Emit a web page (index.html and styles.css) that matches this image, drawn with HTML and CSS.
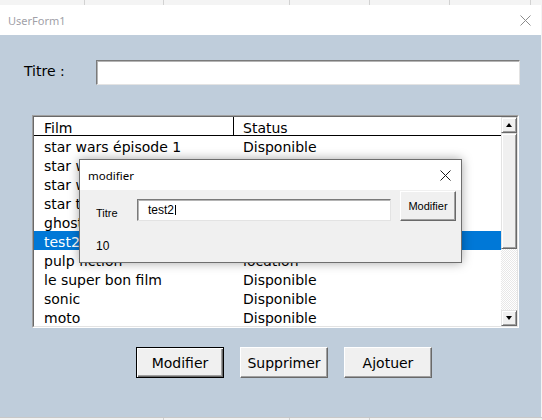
FILE: index.html
```html
<!DOCTYPE html>
<html lang="fr">
<head>
<meta charset="utf-8">
<title>UserForm1</title>
<link rel="stylesheet" href="styles.css">
</head>
<body>
<div class="sheet sheet-top">
  <div class="cell w85"></div><div class="cell w79"></div><div class="cell w126"></div><div class="cell w80"></div><div class="cell w80"></div><div class="cell w81"></div>
</div>
<div class="window">
  <div class="titlebar">
    <span class="title">UserForm1</span>
    <svg class="close" width="11" height="11" viewBox="0 0 11 11"><path d="M0.5 0.5L10.5 10.5M10.5 0.5L0.5 10.5" stroke="#8c8c8c" stroke-width="1" fill="none"/></svg>
  </div>
  <div class="form">
    <div class="titre-row">
      <span class="titre-lbl">Titre :</span>
      <div class="field"></div>
    </div>
    <div class="listbox">
      <div class="lb-inner">
        <div class="list">
          <div class="head"><div class="c1">Film</div><div class="c2">Status</div></div>
          <div class="row"><div class="c1">star wars épisode 1</div><div class="c2">Disponible</div></div>
          <div class="row"><div class="c1">star wars épisode 2</div><div class="c2">location</div></div>
          <div class="row"><div class="c1">star wars épisode 3</div><div class="c2">location</div></div>
          <div class="row"><div class="c1">star trek</div><div class="c2">Disponible</div></div>
          <div class="row"><div class="c1">ghostbusters</div><div class="c2">Disponible</div></div>
          <div class="row sel"><div class="c1">test2</div><div class="c2">location</div></div>
          <div class="row"><div class="c1">pulp fiction</div><div class="c2">location</div></div>
          <div class="row"><div class="c1">le super bon film</div><div class="c2">Disponible</div></div>
          <div class="row"><div class="c1">sonic</div><div class="c2">Disponible</div></div>
          <div class="row"><div class="c1">moto</div><div class="c2">Disponible</div></div>
        </div>
        <div class="scroll">
          <div class="sbtn"><span class="tri-up"></span></div>
          <div class="thumb"></div>
          <div class="track"></div>
          <div class="sbtn"><span class="tri-down"></span></div>
        </div>
      </div>
    </div>
    <div class="buttons">
      <div class="btn default">Modifier</div>
      <div class="btn">Supprimer</div>
      <div class="btn">Ajotuer</div>
    </div>

    <div class="dialog">
      <div class="dlg-title">
        <span class="dlg-name">modifier</span>
        <svg class="close" width="11" height="11" viewBox="0 0 11 11"><path d="M0.5 0.5L10.5 10.5M10.5 0.5L0.5 10.5" stroke="#1a1a1a" stroke-width="1" fill="none"/></svg>
      </div>
      <div class="dlg-body">
        <div class="dlg-row">
          <span class="dlg-lbl">Titre</span>
          <div class="dlg-field"><span class="dlg-text">test2</span><span class="caret"></span></div>
          <div class="dlg-btn">Modifier</div>
        </div>
        <div class="dlg-num">10</div>
      </div>
    </div>
  </div>
</div>
<div class="sheet sheet-bottom">
  <div class="cell w85 nol"></div><div class="cell w79"></div><div class="cell w126"></div><div class="cell w80"></div><div class="cell w80 nol"></div>
</div>
</body>
</html>
```
FILE: styles.css
```css
* { box-sizing: border-box; }
html, body { margin: 0; padding: 0; }
body {
  width: 542px;
  height: 420px;
  overflow: hidden;
  background: #f4f4f4;
  font-family: "DejaVu Sans", sans-serif;
  color: #000;
}

/* excel sheet behind */
.sheet { display: flex; background: #f4f4f4; }
.sheet-top { height: 5px; }
.sheet-bottom { height: 3px; border-top: 1px solid #c8c8c8; }
.cell { height: 100%; border-right: 1px solid #d2d2d2; }
.cell.nol { border-right-color: transparent; }
.w85 { width: 85px; }
.w79 { width: 79px; }
.w126 { width: 126px; }
.w80 { width: 80px; }
.w81 { width: 81px; }

/* main window */
.window { width: 541px; }
.titlebar {
  height: 30px;
  background: #fff;
  display: flex;
  align-items: center;
  justify-content: space-between;
  padding: 0 10px 0 8px;
}
.title {
  font-family: "Noto Sans", sans-serif;
  font-size: 11px;
  color: #a19fa8;
}
.close { display: block; }

.form {
  position: relative;
  height: 382px;
  background: #bfcddb;
  padding-top: 25px;
}

.titre-row { display: flex; height: 25px; }
.titre-lbl {
  width: 96px;
  padding: 3px 0 0 24px;
  font-size: 14px;
}
.field {
  width: 424px;
  height: 25px;
  background: #fff;
  border: 1px solid;
  border-color: #7a7a7a #e3e3e3 #e3e3e3 #7a7a7a;
  box-shadow: inset 1px 1px #b4b4b4;
}

/* listbox */
.listbox {
  margin: 30px 0 0 32px;
  width: 487px;
  height: 213px;
  border: 1px solid;
  border-color: #a0a0a0 #fff #fff #a0a0a0;
}
.lb-inner {
  height: 100%;
  display: flex;
  background: #fff;
  border: 1px solid;
  border-color: #696969 #e3e3e3 #e3e3e3 #696969;
}
.list { width: 467px; font-size: 14px; }
.head, .row {
  display: flex;
  height: 19px;
  line-height: 16px;
  white-space: nowrap;
}
.head { border-bottom: 1px solid #000; }
.c1, .c2 { padding-top: 3px; overflow: hidden; }
.c1 { width: 200px; padding-left: 10px; }
.c2 { flex: 1; padding-left: 9px; }
.head .c1 { border-right: 1px solid #000; }
.row.sel { background: #0078d7; color: #fff; }

.scroll {
  width: 16px;
  display: flex;
  flex-direction: column;
}
.sbtn, .thumb {
  background: #f0f0f0;
  border: 1px solid;
  border-color: #e3e3e3 #696969 #696969 #e3e3e3;
  box-shadow: inset 1px 1px #fff, inset -1px -1px #a0a0a0;
}
.sbtn {
  height: 16px;
  display: flex;
  align-items: center;
  justify-content: center;
}
.thumb { height: 116px; }
.track {
  flex: 1;
  background: repeating-conic-gradient(#fff 0 25%, #e8e8e8 0 50%) 0 0 / 2px 2px;
}
.tri-up, .tri-down {
  width: 0;
  height: 0;
  border-left: 3.5px solid transparent;
  border-right: 3.5px solid transparent;
}
.tri-up { border-bottom: 4px solid #000; }
.tri-down { border-top: 4px solid #000; }

/* bottom buttons */
.buttons {
  display: flex;
  gap: 16px;
  margin: 19px 0 0 136px;
}
.btn {
  width: 88px;
  height: 31px;
  background: #f0f0f0;
  border: 1px solid;
  border-color: #fff #696969 #696969 #fff;
  box-shadow: inset -1px -1px #a0a0a0;
  display: flex;
  align-items: center;
  justify-content: center;
  font-size: 14px;
}
.btn.default {
  border-color: #000;
  box-shadow: inset 1px 1px #fff, inset -1px -1px #696969, inset -2px -2px #a0a0a0;
}

/* modal dialog */
.dialog {
  position: absolute;
  left: 79px;
  top: 124px;
  width: 383px;
  height: 104px;
  background: #f0f0f0;
  border: 1px solid #6e6e6e;
  box-shadow: 0 0 10px rgba(0, 0, 0, 0.35);
}
.dlg-title {
  height: 30px;
  background: #fff;
  display: flex;
  align-items: center;
  justify-content: space-between;
  padding: 0 10px 0 8px;
}
.dlg-name {
  font-family: "Noto Sans", sans-serif;
  font-size: 11.5px;
  color: #000;
}
.dlg-body {
  font-family: "Liberation Sans", sans-serif;
  font-size: 11px;
}
.dlg-row {
  display: flex;
  align-items: flex-start;
  padding-left: 16px;
}
.dlg-lbl { width: 41px; padding-top: 17px; }
.dlg-field {
  margin-top: 9px;
  width: 254px;
  height: 22px;
  background: #fff;
  border: 1px solid;
  border-color: #7a7a7a #e3e3e3 #e3e3e3 #7a7a7a;
  box-shadow: inset 1px 1px #b4b4b4;
  display: flex;
  align-items: center;
  padding-left: 10px;
  font-size: 12px;
}
.caret {
  width: 1px;
  height: 10px;
  background: #000;
  margin-left: 1px;
}
.dlg-btn {
  margin: 1px 0 0 9px;
  width: 56px;
  height: 30px;
  background: #f0f0f0;
  border: 1px solid;
  border-color: #fff #696969 #696969 #fff;
  box-shadow: inset -1px -1px #a0a0a0;
  display: flex;
  align-items: center;
  justify-content: center;
}
.dlg-num {
  margin-top: 18px;
  padding-left: 16px;
  font-size: 12px;
}
```
